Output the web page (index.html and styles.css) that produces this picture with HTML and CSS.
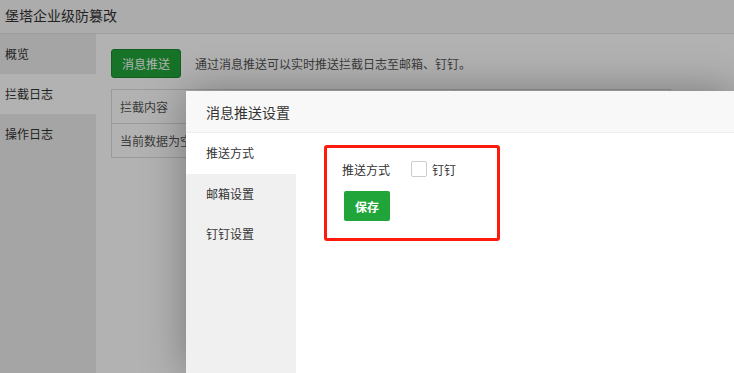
FILE: index.html
```html
<!DOCTYPE html>
<html lang="zh-CN">
<head>
<meta charset="utf-8">
<title>堡塔企业级防篡改</title>
<link rel="stylesheet" href="styles.css">
</head>
<body>
<div class="app">
  <header class="topbar">堡塔企业级防篡改</header>
  <div class="main">
    <nav class="side">
      <div class="nav-item">概览</div>
      <div class="nav-item active">拦截日志</div>
      <div class="nav-item">操作日志</div>
    </nav>
    <section class="content">
      <div class="toolbar">
        <button class="btn-green">消息推送</button>
        <span class="tip">通过消息推送可以实时推送拦截日志至邮箱、钉钉。</span>
      </div>
      <table class="grid">
        <thead><tr><th>拦截内容</th><th>时间</th></tr></thead>
        <tbody><tr><td colspan="2">当前数据为空</td></tr></tbody>
      </table>
    </section>
  </div>
</div>
<div class="shade"></div>
<div class="modal">
  <div class="modal-title">消息推送设置</div>
  <div class="modal-body">
    <ul class="tabs">
      <li class="tab active">推送方式</li>
      <li class="tab">邮箱设置</li>
      <li class="tab">钉钉设置</li>
    </ul>
    <div class="pane">
      <div class="mark">
        <div class="row">
          <span class="label">推送方式</span>
          <span class="check"></span>
          <span class="check-text">钉钉</span>
        </div>
        <button class="btn-save">保存</button>
      </div>
    </div>
  </div>
</div>
</body>
</html>
```
FILE: styles.css
```css
* { box-sizing: border-box; }
html, body { margin: 0; padding: 0; }
body {
  width: 734px;
  height: 373px;
  overflow: hidden;
  position: relative;
  background: #fff;
  font-family: "Noto Sans CJK SC", "Noto Sans", sans-serif;
  color: #333;
  font-size: 12px;
}
.app { height: 373px; display: flex; flex-direction: column; }
.topbar {
  height: 34px;
  background: #f7f7f7;
  border-bottom: 1px solid #e4e4e4;
  padding-left: 5px;
  font-size: 14px;
  line-height: 30px;
  color: #333;
}
.main { flex: 1; display: flex; }
.side { width: 96px; background: #ededed; }
.nav-item {
  height: 40px;
  line-height: 40px;
  padding-left: 5px;
  font-size: 12px;
  color: #333;
}
.nav-item.active { background: #fff; }
.content { flex: 1; padding: 15px 15px; }
.toolbar { display: flex; align-items: center; gap: 14px; }
.btn-green {
  width: 70px;
  height: 29px;
  border: 1px solid #1b8a31;
  border-radius: 3px;
  background: #20a53a;
  color: #fff;
  font-family: inherit;
  font-size: 12px;
  padding: 0;
}
.tip { color: #555; font-size: 12px; }
.grid {
  margin-top: 11px;
  border-collapse: collapse;
  width: 560px;
  font-size: 12px;
  color: #555;
}
.grid th, .grid td {
  border: 1px solid #ddd;
  height: 34px;
  padding: 0 8px;
  text-align: left;
  font-weight: normal;
}
.shade {
  position: absolute;
  inset: 0;
  background: rgba(0, 0, 0, 0.3);
}
.modal {
  position: absolute;
  left: 186px;
  top: 91px;
  width: 548px;
  height: 282px;
  background: #fff;
  box-shadow: 1px 1px 40px rgba(0, 0, 0, 0.35);
  display: flex;
  flex-direction: column;
}
.modal-title {
  height: 42px;
  background: #f8f8f8;
  border-bottom: 1px solid #eee;
  padding-left: 20px;
  line-height: 42px;
  font-size: 14px;
  color: #333;
}
.modal-body { flex: 1; display: flex; }
.tabs {
  list-style: none;
  margin: 0;
  padding: 0;
  width: 110px;
  background: #f0f0f0;
}
.tab {
  height: 40.5px;
  padding-left: 20px;
  font-size: 12px;
  color: #333;
  line-height: 40px;
}
.tab.active { background: #fff; }
.pane { flex: 1; padding: 12px 0 0 28px; }
.mark {
  width: 176px;
  height: 96px;
  border: 3px solid #ff1a0e;
  border-radius: 3px;
  padding: 13px 0 0 15px;
}
.row { display: flex; align-items: center; height: 16px; }
.label { width: 69px; font-size: 12px; color: #333; }
.check {
  width: 16px;
  height: 16px;
  border: 1px solid #ccc;
  border-radius: 2px;
  background: #fff;
}
.check-text { margin-left: 5px; font-size: 12px; color: #333; }
.btn-save {
  display: block;
  margin: 14px 0 0 2px;
  width: 46px;
  height: 30px;
  border: 0;
  border-radius: 2px;
  background: #20a53a;
  color: #fff;
  font-family: inherit;
  font-size: 12px;
  font-weight: bold;
  padding: 0;
}
```
